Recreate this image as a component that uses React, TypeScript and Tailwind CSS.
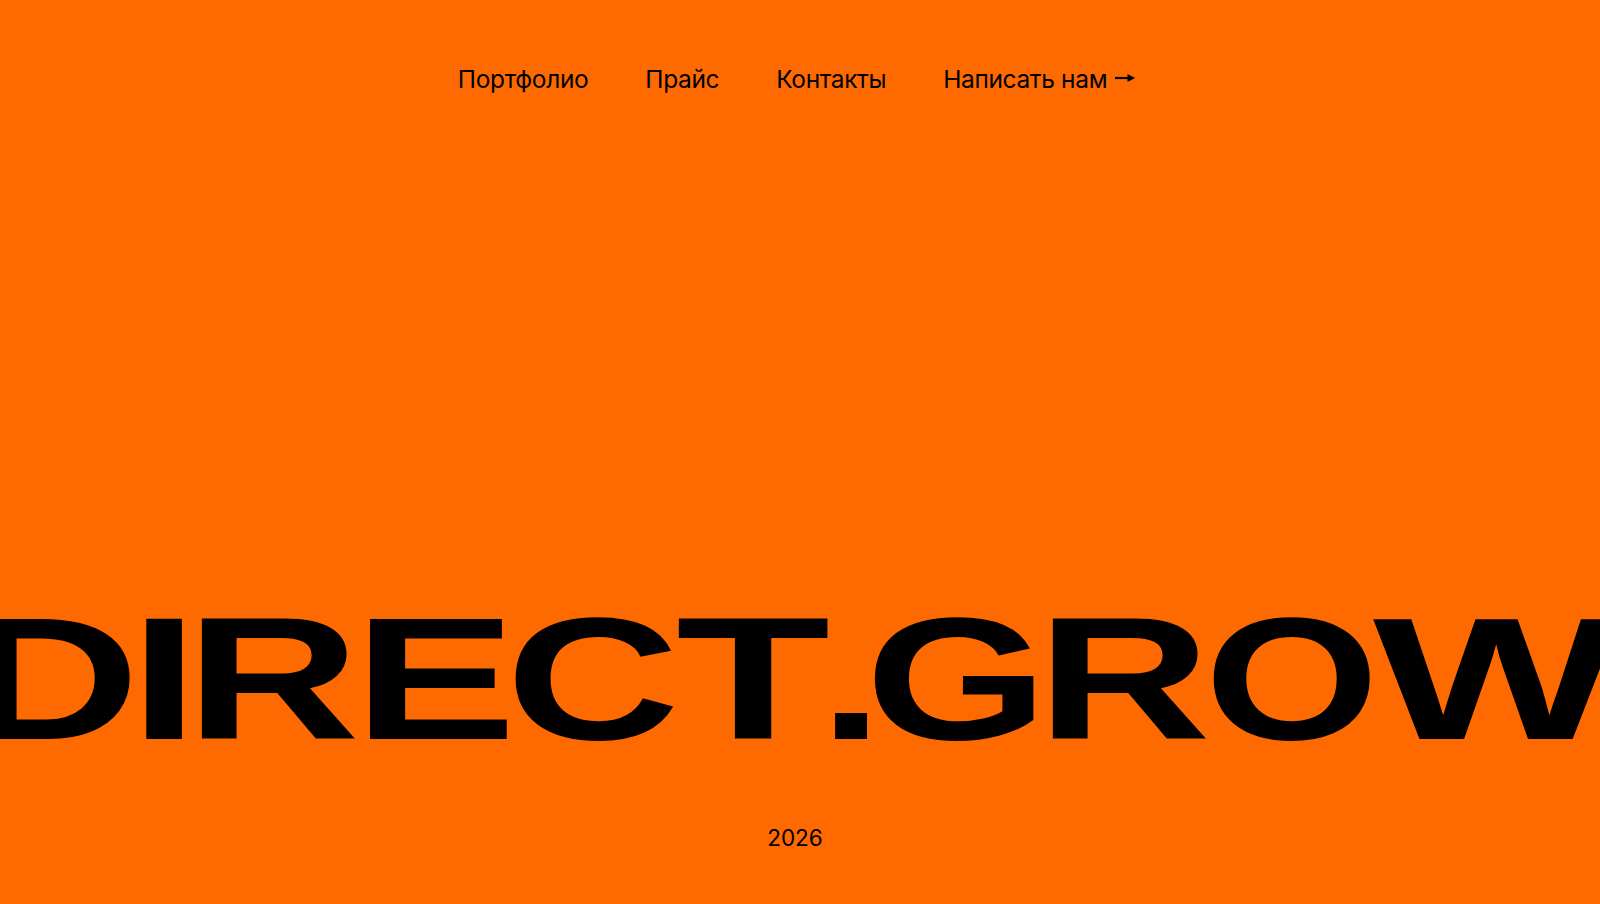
import React from "react";

function Arrow() {
  return (
    <svg width="20" height="10" viewBox="0 0 20 10" className="inline-block ml-[8px] translate-y-[-1px]" aria-hidden="true">
      <line x1="0" y1="5" x2="15" y2="5" stroke="#000" strokeWidth="2.2" />
      <polygon points="12.5,1 20,5 12.5,9" fill="#000" />
    </svg>
  );
}

const letters: { ch: string; box: string; sx: string }[] = [
  { ch: "D", box: "w-[169.5px]", sx: "scale-x-[1.385]" },
  { ch: "I", box: "w-[53.5px]", sx: "scale-x-[1.42]" },
  { ch: "R", box: "w-[169.9px]", sx: "scale-x-[1.385] -translate-x-[3px]" },
  { ch: "E", box: "w-[148.5px]", sx: "scale-x-[1.4]" },
  { ch: "C", box: "w-[166.8px]", sx: "scale-x-[1.385]" },
  { ch: "T", box: "w-[154.7px]", sx: "scale-x-[1.45]" },
  { ch: ".", box: "w-[40.2px]", sx: "scale-x-[1.3]" },
  { ch: "G", box: "w-[171.5px]", sx: "scale-x-[1.35]" },
  { ch: "R", box: "w-[167.3px]", sx: "scale-x-[1.385] -translate-x-[2px]" },
  { ch: "O", box: "w-[160.2px]", sx: "scale-x-[1.29] translate-x-[2px]" },
  { ch: "W", box: "w-[252.2px]", sx: "scale-x-[1.5]" },
];

export default function App() {
  const nav = ["Портфолио", "Прайс", "Контакты"];
  return (
    <div className="h-[904px] w-full overflow-hidden bg-[#ff6a00] text-black flex flex-col" style={{ fontFamily: "Inter, 'Liberation Sans', sans-serif" }}>
      <header className="h-[158px] shrink-0 flex items-center justify-center gap-[57px] pr-[7px] text-[24.5px] leading-none tracking-[-0.015em]">
        {nav.map((n) => (
          <a key={n} href="#" className="text-black">{n}</a>
        ))}
        <a href="#" className="text-black flex items-center">Написать нам<Arrow /></a>
      </header>
      <div className="flex-1" />
      <div className="h-[200px] shrink-0 flex items-center justify-center overflow-hidden">
        <h1 aria-label="DIRECT.GROW" className="flex shrink-0 -translate-x-[5px] whitespace-nowrap font-bold text-[174px] leading-none font-['Liberation_Sans',sans-serif]">
          {letters.map((l, i) => (
            <span key={i} className={`${l.box} shrink-0 flex justify-center`}>
              <span className={`block ${l.sx}`}>{l.ch}</span>
            </span>
          ))}
        </h1>
      </div>
      <footer className="h-[125px] shrink-0 flex items-start pt-[48px] pr-[10px] justify-center text-[22.5px] leading-none">
        2026
      </footer>
    </div>
  );
}
